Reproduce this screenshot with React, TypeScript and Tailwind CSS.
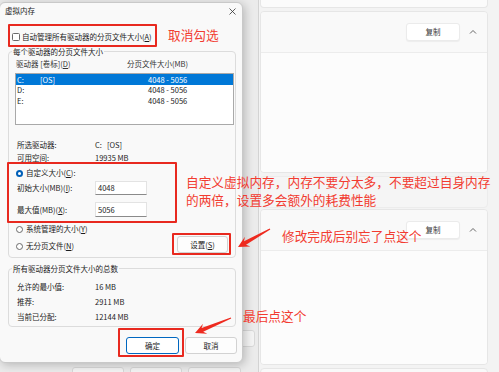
import React from "react";

function U({ c }: { c: string }) {
  return <span className="underline underline-offset-[1px] decoration-[0.5px]">{c}</span>;
}

function Arrow({ x1, y1, x2, y2 }: { x1: number; y1: number; x2: number; y2: number }) {
  const dx = x2 - x1;
  const dy = y2 - y1;
  const len = Math.hypot(dx, dy);
  const ux = dx / len;
  const uy = dy / len;
  const nx = -uy;
  const ny = ux;
  const p = (bx: number, by: number, back: number, w: number) =>
    `${(bx - ux * back + nx * w).toFixed(1)},${(by - uy * back + ny * w).toFixed(1)}`;
  const pts = [
    p(x1, y1, 0, 0.6),
    p(x2, y2, 8, 2),
    p(x2, y2, 11, 5.5),
    `${x2},${y2}`,
    p(x2, y2, 11, -5.5),
    p(x2, y2, 8, -2),
    p(x1, y1, 0, -0.6),
  ].join(" ");
  return <polygon points={pts} fill="#ee2a1f" />;
}

function Radio({ on }: { on?: boolean }) {
  return on ? (
    <div className="w-[7px] h-[7px] rounded-full bg-[#005fb8] flex items-center justify-center shrink-0">
      <div className="w-[3px] h-[3px] rounded-full bg-white" />
    </div>
  ) : (
    <div className="w-[7px] h-[7px] rounded-full border border-[#6a6a6a] bg-white shrink-0" />
  );
}

function CopyHeader() {
  return (
    <div className="h-[41px] shrink-0 bg-[#f9f9f9] border-b border-[#ececec] flex items-center justify-end pr-[10px] gap-[9px]">
      <div className="w-[54px] h-[18px] rounded-[3px] bg-white border border-[#ebebeb] shadow-[0_1px_1px_rgba(0,0,0,0.05)] flex items-center justify-center text-[7.5px] text-[#333]">
        复制
      </div>
      <svg width="8" height="6" viewBox="0 0 8 6">
        <path d="M1 4.5 L4 1.5 L7 4.5" stroke="#555" strokeWidth="0.9" fill="none" />
      </svg>
    </div>
  );
}

export default function App() {
  return (
    <div className="relative w-[499px] h-[372px] overflow-hidden flex bg-[#f3f3f3] text-[#1b1b1b] font-['Noto_Sans_CJK_SC','Noto_Sans',sans-serif]">
      {/* window behind the dialog */}
      <div className="w-[259px] shrink-0 bg-[#ebebeb] border-r border-[#d3d3d3] flex flex-col">
        <div className="h-[330px] shrink-0" />
        <div className="flex justify-end pr-[3px]">
          <div className="w-[56px] h-[17px] rounded-[3px] border border-[#d8d8d8] bg-[#f4f4f4]" />
        </div>
        <div className="mt-[20px] flex pl-[72px] gap-[6px]">
          <div className="w-[52px] h-[17px] rounded-[3px] border border-[#d8d8d8] bg-[#f4f4f4]" />
          <div className="w-[52px] h-[17px] rounded-[3px] border border-[#d8d8d8] bg-[#f4f4f4]" />
          <div className="w-[53px] h-[17px] rounded-[3px] border border-[#d8d8d8] bg-[#f4f4f4]" />
        </div>
      </div>

      {/* settings cards on the right */}
      <div className="flex-1 pl-[1px] pr-[11px] flex flex-col">
        <div className="h-[8px] shrink-0 bg-[#fbfbfb] border border-t-0 border-[#e6e6e6] rounded-b-[4px]" />
        <div className="mt-[3px] h-[162px] shrink-0 border border-[#e6e6e6] rounded-[4px] flex flex-col overflow-hidden">
          <CopyHeader />
          <div className="flex-1 bg-[#fcfcfc]" />
        </div>
        <div className="mt-[3px] h-[32px] shrink-0 bg-[#f5f5f5] border border-[#ececec] rounded-[4px]" />
        <div className="mt-[1px] h-[156px] shrink-0 border border-[#e6e6e6] rounded-[4px] flex flex-col overflow-hidden">
          <CopyHeader />
          <div className="flex-1 bg-[#fcfcfc]" />
        </div>
        <div className="mt-[3px] h-[40px] shrink-0 bg-[#f9f9f9] border border-[#e6e6e6] rounded-[4px]" />
      </div>

      {/* 虚拟内存 dialog */}
      <div className="absolute left-[-1px] top-[2px] w-[244px] h-[361px] bg-[#f9f9f9] border border-[#c9c9c9] rounded-[6px] shadow-[2px_2px_10px_rgba(0,0,0,0.22)] flex flex-col text-[7.5px] leading-none">
        <div className="h-[16px] shrink-0 flex items-center justify-between pl-[5px] pr-[6px]">
          <span>虚拟内存</span>
          <svg width="7" height="7" viewBox="0 0 7 7">
            <path d="M0.5 0.5 L6.5 6.5 M6.5 0.5 L0.5 6.5" stroke="#333" strokeWidth="0.8" />
          </svg>
        </div>

        <div className="mt-[12px] h-[12px] shrink-0 flex items-center pl-[12px] gap-[2px]">
          <div className="w-[8px] h-[8px] rounded-[1.5px] border border-[#6a6a6a] bg-white" />
          <span>
            自动管理所有驱动器的分页文件大小(<U c="A" />)
          </span>
        </div>

        {/* group 1 */}
        <div className="relative mt-[8px] ml-[8px] w-[228px] h-[207px] shrink-0 border border-[#dcdcdc] rounded-[4px] flex flex-col">
          <span className="absolute left-[3px] -top-[5px] h-[10px] px-[1px] bg-[#f9f9f9] flex items-center">
            每个驱动器的分页文件大小
          </span>
          <div className="mt-[7px] h-[10px] flex items-center pl-[7px] text-[#333]">
            <span className="w-[111px] shrink-0">
              驱动器 [卷标](<U c="D" />)
            </span>
            <span>分页文件大小(MB)</span>
          </div>
          <div className="mt-[4px] ml-[6px] mr-[1px] h-[52px] bg-white border border-[#a9a9a9] flex flex-col">
            <div className="h-[10.5px] flex items-center pl-[1px] bg-[#0078d7] text-white">
              <span className="w-[23px]">C:</span>
              <span className="w-[108px]">[OS]</span>
              <span>4048 - 5056</span>
            </div>
            <div className="h-[10.5px] flex items-center pl-[1px]">
              <span className="w-[131px]">D:</span>
              <span>4048 - 5056</span>
            </div>
            <div className="h-[10.5px] flex items-center pl-[1px]">
              <span className="w-[131px]">E:</span>
              <span>4048 - 5056</span>
            </div>
          </div>
          <div className="mt-[15px] h-[10px] flex items-center pl-[8px]">
            <span className="w-[78px]">所选驱动器:</span>
            <span>C:&nbsp;&nbsp;&nbsp;[OS]</span>
          </div>
          <div className="mt-[3px] h-[10px] flex items-center pl-[8px]">
            <span className="w-[78px]">可用空间:</span>
            <span>19935 MB</span>
          </div>
          <div className="mt-[5px] h-[10px] flex items-center pl-[7px] gap-[3px]">
            <Radio on />
            <span>
              自定义大小(<U c="C" />):
            </span>
          </div>
          <div className="mt-[3px] h-[14px] flex items-center pl-[8px]">
            <span className="w-[78px]">
              初始大小(MB)(<U c="I" />):
            </span>
            <div className="w-[52px] h-[14px] bg-white border border-[#e3e3e3] border-b-[#8a8a8a] flex items-center pl-[2px]">
              4048
            </div>
          </div>
          <div className="mt-[7px] h-[15px] flex items-center pl-[8px]">
            <span className="w-[78px]">
              最大值(MB)(<U c="X" />):
            </span>
            <div className="w-[52px] h-[15px] bg-white border border-[#e3e3e3] border-b-[#8a8a8a] flex items-center pl-[2px]">
              5056
            </div>
          </div>
          <div className="mt-[7px] h-[10px] flex items-center pl-[7px] gap-[3px]">
            <Radio />
            <span>
              系统管理的大小(<U c="Y" />)
            </span>
          </div>
          <div className="mt-[2px] h-[17px] flex items-center justify-between pl-[7px] pr-[7px]">
            <div className="flex items-center gap-[3px] pt-[3px]">
              <Radio />
              <span>
                无分页文件(<U c="N" />)
              </span>
            </div>
            <div className="w-[51px] h-[17px] rounded-[3px] bg-[#fdfdfd] border border-[#d2d2d2] flex items-center justify-center">
              设置(<U c="S" />)
            </div>
          </div>
        </div>

        {/* group 2 */}
        <div className="relative mt-[10px] ml-[8px] w-[228px] h-[59px] shrink-0 border border-[#dcdcdc] rounded-[4px] flex flex-col">
          <span className="absolute left-[3px] -top-[5px] h-[10px] px-[1px] bg-[#f9f9f9] flex items-center">
            所有驱动器分页文件大小的总数
          </span>
          <div className="mt-[13px] h-[10px] flex items-center pl-[8px]">
            <span className="w-[78px]">允许的最小值:</span>
            <span>16 MB</span>
          </div>
          <div className="mt-[5px] h-[10px] flex items-center pl-[8px]">
            <span className="w-[78px]">推荐:</span>
            <span>2911 MB</span>
          </div>
          <div className="mt-[5px] h-[10px] flex items-center pl-[8px]">
            <span className="w-[78px]">当前已分配:</span>
            <span>12144 MB</span>
          </div>
        </div>

        <div className="mt-[10px] h-[17px] shrink-0 flex justify-end pr-[5px] gap-[6px]">
          <div className="w-[53px] h-[17px] rounded-[3px] bg-white border border-[#0067c0] flex items-center justify-center">
            确定
          </div>
          <div className="w-[52px] h-[17px] rounded-[3px] bg-[#fdfdfd] border border-[#d2d2d2] flex items-center justify-center">
            取消
          </div>
        </div>
      </div>

      {/* red annotations */}
      <div className="absolute inset-0 pointer-events-none text-[#f23b30] text-[12.7px] leading-none">
        <div className="absolute left-[8px] top-[24px] w-[149px] h-[23px] border-2 border-[#e8291f] rounded-[1px]" />
        <div className="absolute left-[168px] top-[29px]">取消勾选</div>
        <div className="absolute left-[7px] top-[162px] w-[170px] h-[61px] border-2 border-[#e8291f] rounded-[1px]" />
        <div className="absolute left-[186px] top-[173px] leading-[18px] whitespace-nowrap">
          <div>自定义虚拟内存，内存不要分太多，不要超过自身内存</div>
          <div>的两倍，设置多会额外的耗费性能</div>
        </div>
        <div className="absolute left-[172px] top-[233px] w-[59px] h-[22px] border-2 border-[#e8291f] rounded-[1px]" />
        <div className="absolute left-[282px] top-[230px] whitespace-nowrap">修改完成后别忘了点这个</div>
        <div className="absolute left-[118px] top-[328px] w-[66px] h-[29px] border-2 border-[#e8291f] rounded-[1px]" />
        <div className="absolute left-[243px] top-[310px] whitespace-nowrap">最后点这个</div>
        <svg className="absolute left-0 top-0" width="499" height="372">
          <Arrow x1={270} y1={229} x2={238} y2={247} />
          <Arrow x1={231} y1={318} x2={195} y2={333} />
        </svg>
      </div>
    </div>
  );
}
